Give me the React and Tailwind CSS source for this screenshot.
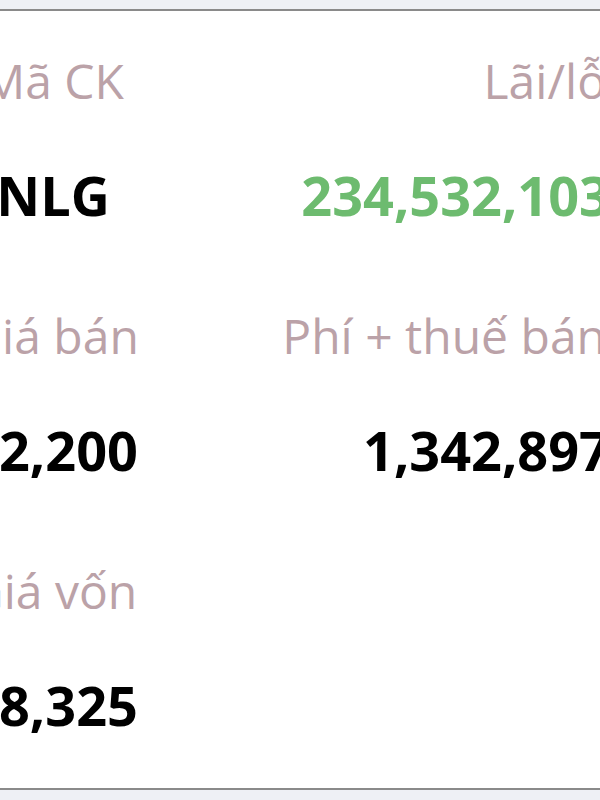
import React from 'react';

const rows = [
  { left: { label: 'Mã CK', value: 'NLG' }, right: { label: 'Lãi/lỗ', value: '234,532,103', green: true } },
  { left: { label: 'Giá bán', value: '82,200' }, right: { label: 'Phí + thuế bán', value: '1,342,897' } },
  { left: { label: 'Giá vốn', value: '48,325' }, right: null },
];

const App = () => {
  return (
    <div className="w-[600px] h-[800px] overflow-hidden bg-[#eef0f5] pt-[9px] pb-[10px] font-['Open_Sans',sans-serif]">
      <div className="h-full bg-white border-y-2 border-[#8a8a8a] overflow-hidden">
        <div className="flex flex-col pt-[38px]">
          {rows.map((row, i) => (
            <div key={i} className="flex h-[255px]">
              {/* left column, centred */}
              <div className="w-[106px] flex flex-col items-center">
                <p className="text-[48px] leading-[64px] text-[#bba2a8] whitespace-nowrap">{row.left.label}</p>
                <p className="mt-[50px] text-[54px] leading-[64px] font-bold text-black whitespace-nowrap">{row.left.value}</p>
              </div>
              {row.right && (
                <div className="flex-1 mr-[-6px] flex flex-col items-end">
                  <p className="text-[48px] leading-[64px] text-[#bba2a8] whitespace-nowrap">{row.right.label}</p>
                  <p className={`mt-[50px] mr-[-4px] text-[54px] leading-[64px] font-bold whitespace-nowrap ${row.right.green ? 'text-[#6dbb6f]' : 'text-black'}`}>{row.right.value}</p>
                </div>
              )}
            </div>
          ))}
        </div>
      </div>
    </div>
  );
};

export default App;
